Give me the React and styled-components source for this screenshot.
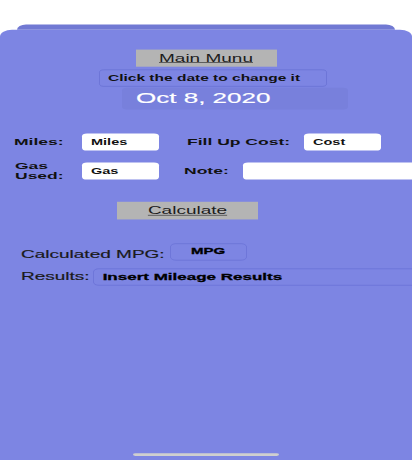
import React from 'react';
import styled, { createGlobalStyle } from 'styled-components';

// the screenshot is squashed vertically, so the page is laid out tall and scaled down
const SY = 0.57;

const GlobalStyle = createGlobalStyle`
  html, body {
    margin: 0;
    padding: 0;
    background: #ffffff;
    overflow: hidden;
  }
  body {
    font-family: "Liberation Sans", Arial, sans-serif;
  }
`;

const Frame = styled.div`
  width: 412px;
  height: 460px;
  overflow: hidden;
`;

const Stage = styled.div`
  width: 412px;
  height: ${460 / SY}px;
  transform: scaleY(${SY});
  transform-origin: top left;
  display: flex;
  flex-direction: column;
`;

const TopSpace = styled.div`
  height: 43px;
  flex-shrink: 0;
`;

const BackCard = styled.div`
  margin: 0 17px;
  height: 8.5px;
  flex-shrink: 0;
  background: #7179d3;
  border-radius: 10px 10px 0 0;
`;

const Sheet = styled.div`
  flex: 1;
  background: #7d85e3;
  border-radius: 12px 12px 0 0;
  overflow: hidden;
  display: flex;
  flex-direction: column;
  padding-top: 35px;
`;

const GrayButton = styled.button`
  align-self: ${(p) => (p.$center ? 'center' : 'flex-start')};
  margin-left: ${(p) => (p.$left ? `${p.$left}px` : '0')};
  margin-top: ${(p) => p.$top || 0}px;
  width: 141px;
  height: ${(p) => p.$height || 30}px;
  background: #b4b4b4;
  border: none;
  padding: 0;
  font-family: "Liberation Sans", Arial, sans-serif;
  font-size: 19px;
  color: #1c1c1c;
  text-decoration: underline;
  flex-shrink: 0;
`;

const HintBox = styled.div`
  margin-left: 99px;
  margin-top: 5px;
  width: 228px;
  height: 30px;
  box-sizing: border-box;
  border: 1px solid rgba(96, 104, 205, 0.7);
  border-radius: 5px;
  display: flex;
  align-items: center;
  padding-left: 8px;
  font-size: 15.5px;
  font-weight: bold;
  color: #111;
  flex-shrink: 0;
`;

const DateBox = styled.div`
  margin-left: 122px;
  margin-top: 2px;
  width: 226px;
  height: 38px;
  background: #7880dc;
  border-radius: 5px;
  display: flex;
  align-items: center;
  padding-left: 14px;
  box-sizing: border-box;
  font-size: 26px;
  color: #ffffff;
  -webkit-text-stroke: 0.3px #ffffff;
  flex-shrink: 0;
`;

const FormRow = styled.div`
  display: flex;
  align-items: center;
  padding-left: ${(p) => p.$pad}px;
  margin-top: ${(p) => p.$top}px;
  flex-shrink: 0;
`;

const Label = styled.div`
  width: ${(p) => p.$width}px;
  margin-left: ${(p) => p.$gap || 0}px;
  flex-shrink: 0;
  font-size: 17.5px;
  font-weight: bold;
  line-height: 1;
  color: #111;
`;

const Field = styled.input`
  width: ${(p) => p.$width || 77}px;
  height: 30px;
  flex-shrink: 0;
  box-sizing: border-box;
  border: none;
  border-radius: 5px;
  background: #ffffff;
  padding: 0 9px;
  font-family: "Liberation Sans", Arial, sans-serif;
  font-size: 14.5px;
  font-weight: bold;
  color: #111;
  outline: none;
  &::placeholder {
    color: #111;
    opacity: 1;
  }
`;

const ResultRow = styled.div`
  display: flex;
  align-items: center;
  padding-left: 21px;
  margin-top: ${(p) => p.$top}px;
  flex-shrink: 0;
`;

const ResultLabel = styled.div`
  font-size: 19px;
  color: #1a1a1a;
  -webkit-text-stroke: 0.3px #1a1a1a;
  margin-top: ${(p) => p.$drop || 0}px;
  flex-shrink: 0;
`;

const ResultBox = styled.div`
  margin-left: ${(p) => p.$gap}px;
  width: ${(p) => p.$width}px;
  height: 30px;
  flex-shrink: 0;
  box-sizing: border-box;
  border: 1px solid rgba(100, 108, 210, 0.75);
  border-radius: 6px;
  display: flex;
  align-items: center;
  justify-content: ${(p) => (p.$center ? 'center' : 'flex-start')};
  padding-left: ${(p) => (p.$center ? 0 : 9)}px;
  padding-bottom: ${(p) => (p.$center ? 6 : 0)}px;
  font-size: ${(p) => p.$size}px;
  font-weight: bold;
  -webkit-text-stroke: 0.5px #000;
  color: #000;
`;

const HomeBar = styled.div`
  margin-top: auto;
  margin-bottom: 7px;
  align-self: center;
  width: 146px;
  height: 5px;
  border-radius: 3px;
  background: #cfcfcf;
  flex-shrink: 0;
`;

const App = () => {
  return (
    <Frame>
      <GlobalStyle />
      <Stage>
        <TopSpace />
        <BackCard />
        <Sheet>
          <GrayButton $center>Main Munu</GrayButton>
          <HintBox>Click the date to change it</HintBox>
          <DateBox>Oct 8, 2020</DateBox>

          <FormRow $pad={14} $top={42}>
            <Label $width={68}>Miles:</Label>
            <Field placeholder="Miles" />
            <Label $width={117} $gap={28}>
              Fill Up Cost:
            </Label>
            <Field placeholder="Cost" />
          </FormRow>
          <FormRow $pad={15} $top={18.5}>
            <Label $width={67}>
              Gas
              <br />
              Used:
            </Label>
            <Field placeholder="Gas" />
            <Label $width={59} $gap={25}>
              Note:
            </Label>
            <Field $width={200} />
          </FormRow>

          <GrayButton $left={117} $top={37} $height={31}>
            Calculate
          </GrayButton>

          <ResultRow $top={42}>
            <ResultLabel $drop={8}>Calculated MPG:</ResultLabel>
            <ResultBox $gap={5} $width={77} $size={15} $center>
              MPG
            </ResultBox>
          </ResultRow>
          <ResultRow $top={14}>
            <ResultLabel>Results:</ResultLabel>
            <ResultBox $gap={3} $width={330} $size={17}>
              Insert Mileage Results
            </ResultBox>
          </ResultRow>

          <HomeBar />
        </Sheet>
      </Stage>
    </Frame>
  );
};

export default App;
